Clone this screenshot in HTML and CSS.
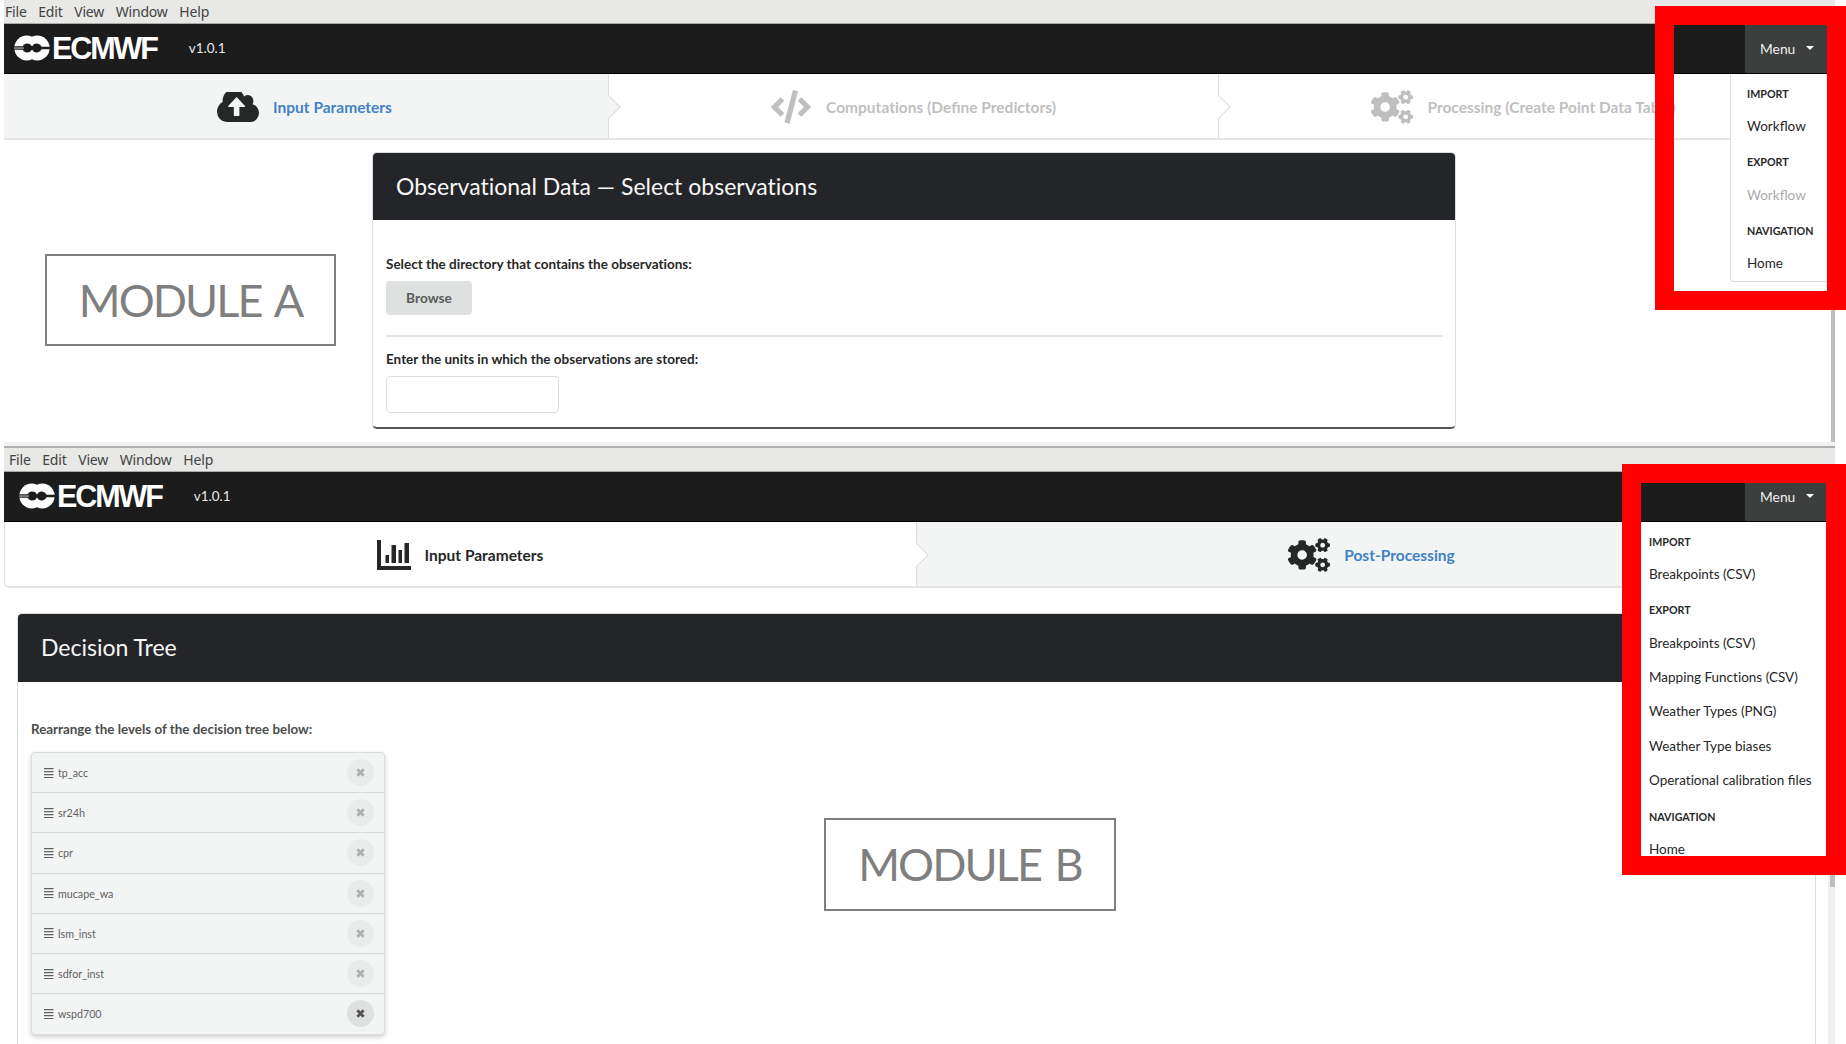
FILE: index.html
```html
<!DOCTYPE html>
<html lang="en">
<head>
<meta charset="utf-8">
<title>ECMWF Calibration</title>
<link rel="stylesheet" href="styles.css">
</head>
<body>
<svg class="defs" width="0" height="0" aria-hidden="true">
<symbol id="small-gear" viewBox="400 0 240 212" overflow="visible"><path d="M512.1 191l-8.2 14.3c-3 5.3-9.4 7.5-15.1 5.4-11.8-4.4-22.6-10.7-32.1-18.6-4.6-3.8-5.8-10.5-2.8-15.7l8.2-14.3c-6.9-8-12.3-17.3-15.9-27.4h-16.5c-6 0-11.2-4.3-12.2-10.3-2-12-2.1-24.6 0-37.1 1-6 6.2-10.4 12.2-10.4h16.5c3.6-10.1 9-19.4 15.9-27.4l-8.2-14.3c-3-5.2-1.9-11.9 2.8-15.7 9.5-7.9 20.4-14.2 32.1-18.6 5.7-2.1 12.1.1 15.1 5.4l8.2 14.3c10.5-1.9 21.2-1.9 31.7 0L552 6.300c3-5.3 9.4-7.5 15.1-5.4 11.8 4.4 22.6 10.7 32.1 18.6 4.6 3.8 5.8 10.5 2.8 15.7l-8.2 14.3c6.9 8 12.3 17.3 15.9 27.4h16.5c6 0 11.2 4.3 12.2 10.3 2 12 2.1 24.6 0 37.1-1 6-6.2 10.4-12.2 10.4h-16.5c-3.6 10.1-9 19.4-15.9 27.4l8.2 14.3c3 5.2 1.900 11.900-2.800 15.700-9.500 7.900-20.400 14.200-32.100 18.600-5.700 2.100-12.100-.1-15.100-5.400l-8.200-14.300c-10.400 1.900-21.200 1.900-31.700 0zm-10.500-58.800c38.500 29.600 82.400-14.300 52.800-52.800-38.500-29.700-82.400 14.300-52.800 52.800z"/></symbol>
<symbol id="cogs" viewBox="0 0 640 512"><use href="#small-gear" x="400" y="0" width="240" height="212"/><use href="#small-gear" x="400" y="299" width="240" height="212"/><path d="M386.3 286.100l33.700 16.800c10.100 5.800 14.500 18.100 10.500 29.100-8.900 24.200-26.400 46.400-42.600 65.800-7.400 8.900-20.200 11.100-30.300 5.300l-29.100-16.800c-16 13.700-34.600 24.600-54.900 31.700v33.600c0 11.600-8.300 21.600-19.700 23.600-24.600 4.200-50.400 4.400-75.900 0-11.500-2-20-11.900-20-23.600V418c-20.300-7.200-38.900-18-54.900-31.700L74 403c-10 5.800-22.900 3.600-30.300-5.300-16.200-19.400-33.300-41.600-42.200-65.700-4-10.900.4-23.200 10.500-29.100l33.300-16.800c-3.900-20.900-3.900-42.400 0-63.400L12 205.800c-10.100-5.800-14.600-18.100-10.500-29 8.900-24.200 26-46.400 42.200-65.800 7.400-8.900 20.200-11.100 30.300-5.300l29.100 16.800c16-13.700 34.600-24.600 54.900-31.700V57.100c0-11.500 8.200-21.500 19.600-23.500 24.600-4.200 50.500-4.400 76-.1 11.500 2 20 11.900 20 23.600v33.600c20.300 7.200 38.900 18 54.900 31.700l29.100-16.800c10-5.800 22.900-3.600 30.300 5.300 16.200 19.400 33.200 41.600 42.100 65.800 4 10.900.1 23.200-10 29.100l-33.700 16.800c3.900 21 3.900 42.500 0 63.500zm-117.600 21.100c59.200-77-28.700-164.900-105.700-105.700-59.200 77 28.700 164.900 105.700 105.700z"/></symbol>
<symbol id="mark" viewBox="0 0 36 26"><circle cx="12.700" cy="13" r="12.400"/><circle cx="23.300" cy="13" r="12.400"/><path fill="#1b1c1b" d="M0 11.300h8.600a5.200 5.200 0 0 1 7.900-1.700L18 11.600l1.500-2a5.200 5.200 0 0 1 8 2.200H36v2.400h-8.500a5.200 5.200 0 0 1-8 2.200L18 14.400l-1.500 2a5.200 5.200 0 0 1-7.900-1.700H0z"/><path fill="#aaa" d="M0 12.400h10v1.300H0z"/></symbol>
<symbol id="bars" viewBox="0 0 10 10"><path d="M0 0h9.500v1.300H0zM0 3h9.500v1.300H0zM0 6h9.500v1.300H0zM0 9h9.500v1H0z"/></symbol>
<symbol id="times" viewBox="0 0 8 8"><path d="M1.200 1.200l5.600 5.600M6.800 1.200L1.200 6.800" stroke="currentColor" stroke-width="2.500"/></symbol>
</svg>

<section class="window window-a">
  <div class="menubar"><span>File</span><span>Edit</span><span>View</span><span>Window</span><span>Help</span></div>
  <header class="topbar"><svg class="mark"><use href="#mark"/></svg><b class="brand">ECMWF</b><span class="version">v1.0.1</span><div class="menu-button">Menu<i class="caret"></i></div></header>
  <nav class="steps steps-a">
    <div class="step active"><svg class="cloud" viewBox="0 256 1920 1280" preserveAspectRatio="none"><path d="M1280 864q0-14-9-23l-352-352q-9-9-23-9t-23 9l-351 351q-10 12-10 24 0 14 9 23t23 9h224v352q0 13 9.500 22.500t22.500 9.500h192q13 0 22.500-9.500t9.500-22.500v-352h224q13 0 22.500-9.500t9.500-22.500zm640 288q0 159-112.500 271.500t-271.500 112.500h-1088q-185 0-316.500-131.500t-131.500-316.500q0-130 70-240t188-165q-2-30-2-43 0-212 150-362t362-150q156 0 285.500 87t188.500 231q71-62 166-62 106 0 181 75t75 181q0 76-41 138 130 31 213.500 135.500t83.500 238.500z"/></svg><span>Input Parameters</span></div>
    <div class="step disabled"><svg class="code" viewBox="0 0 42 34"><path d="M12.500 9L4.500 17l8 8M29.500 9l8 8-8 8M25.500 .7l-8.500 32.300" fill="none" stroke="currentColor" stroke-width="5.300"/></svg><span>Computations (<span class="lig">Define</span> Predictors)</span></div>
    <div class="step disabled"><svg class="cogs"><use href="#cogs"/></svg><span>Processing (Create Point Data Table)</span></div>
  </nav>
  <main class="stage-a">
    <div class="module module-a">MODULE A</div>
    <article class="card card-a">
      <h2>Observational Data — Select observations</h2>
      <div class="card-body">
        <label>Select the directory that contains the observations:</label>
        <button>Browse</button>
        <hr>
        <label>Enter the units in which the observations are stored:</label>
        <input type="text">
      </div>
    </article>
    <div class="thumb-a"></div>
  </main>
  <aside class="dropdown drop-a"><h4>IMPORT</h4><p class="lig">Workflow</p><h4>EXPORT</h4><p class="lig off">Workflow</p><h4>NAVIGATION</h4><p>Home</p></aside>
  <div class="highlight mark-a"></div>
</section>

<section class="window window-b">
  <div class="menubar"><span>File</span><span>Edit</span><span>View</span><span>Window</span><span>Help</span></div>
  <header class="topbar"><svg class="mark"><use href="#mark"/></svg><b class="brand">ECMWF</b><span class="version">v1.0.1</span><div class="menu-button">Menu<i class="caret"></i></div></header>
  <nav class="steps steps-b">
    <div class="step"><svg class="chart" viewBox="0 0 34 30"><path d="M0 0h4v26h30v4H0zM8.500 15H12v8H8.500zM14.500 5H19v18h-4.500zM21.500 10H25v13h-3.500zM27.500 3H32v20h-4.500z"/></svg><span>Input Parameters</span></div>
    <div class="step active"><svg class="cogs"><use href="#cogs"/></svg><span>Post-Processing</span></div>
  </nav>
  <main class="stage-b">
    <article class="card card-b">
      <h2>Decision Tree</h2>
      <div class="card-body">
        <label>Rearrange the levels of the decision tree below:</label>
        <ul class="levels">
          <li><svg class="grip"><use href="#bars"/></svg><span>tp_acc</span><i class="remove"><svg><use href="#times"/></svg></i></li>
          <li><svg class="grip"><use href="#bars"/></svg><span>sr24h</span><i class="remove"><svg><use href="#times"/></svg></i></li>
          <li><svg class="grip"><use href="#bars"/></svg><span>cpr</span><i class="remove"><svg><use href="#times"/></svg></i></li>
          <li><svg class="grip"><use href="#bars"/></svg><span>mucape_wa</span><i class="remove"><svg><use href="#times"/></svg></i></li>
          <li><svg class="grip"><use href="#bars"/></svg><span>lsm_inst</span><i class="remove"><svg><use href="#times"/></svg></i></li>
          <li><svg class="grip"><use href="#bars"/></svg><span>sdfor_inst</span><i class="remove"><svg><use href="#times"/></svg></i></li>
          <li><svg class="grip"><use href="#bars"/></svg><span>wspd700</span><i class="remove on"><svg><use href="#times"/></svg></i></li>
        </ul>
      </div>
    </article>
    <div class="track"><div class="thumb-b"></div></div>
  </main>
  <div class="module module-b">MODULE B</div>
  <aside class="dropdown drop-b"><h4>IMPORT</h4><p>Breakpoints (CSV)</p><h4>EXPORT</h4><p>Breakpoints (CSV)</p><p>Mapping Functions (CSV)</p><p>Weather Types (PNG)</p><p>Weather Type biases</p><p>Operational calibration <span class="lig">files</span></p><h4>NAVIGATION</h4><p>Home</p></aside>
  <div class="highlight mark-b"></div>
</section>
</body>
</html>
```
FILE: styles.css
```css
* { box-sizing: border-box; }
body { margin: 0; width: 1846px; height: 1044px; overflow: hidden; background: #fff; font-family: Lato, sans-serif; color: #262727; font-variant-ligatures: none; }
.lig { font-variant-ligatures: normal; }
.defs { display: block; height: 0; }
svg { display: block; flex: none; fill: currentColor; }
.window { position: relative; width: 1846px; padding: 0 11px 0 4px; display: flex; flex-direction: column; overflow: hidden; }
.window-a { height: 442px; }
.window-b { height: 602px; }

.menubar { flex: none; height: 24px; padding-left: 1px; display: flex; gap: 11.700px; background: #e8e8e6; border-bottom: 1px solid #aaa; font-family: "Noto Sans", sans-serif; font-size: 14px; line-height: 23px; letter-spacing: -.2px; color: #424444; }
.window-b .menubar { height: 30px; padding: 2px 0 0 5px; border-top: 4px solid #f2f2f2; box-shadow: inset 0 2px #aeb0ad; line-height: 24px; }
.topbar { flex: none; height: 50px; padding: 0 0 1px 10px; display: flex; align-items: center; background: #1b1c1b; border-bottom: 1px solid #000; color: #fff; }
.window-b .topbar { padding-left: 15px; }
.mark { width: 36px; height: 26px; }
.brand { margin-left: 2px; font-family: "Liberation Sans", sans-serif; font-size: 30.500px; line-height: 48px; letter-spacing: -2.100px; }
.version { margin-left: 32px; font-size: 13.500px; color: #e8e8e8; }
.menu-button { margin: 0 0 -1px auto; width: 90px; height: 49px; padding: 0 0 1px 15px; display: flex; align-items: center; background: #3d3e3e; font-size: 13.800px; color: #f0f0f0; }
.caret { margin-left: 11px; border: 4px solid transparent; border-top-color: #fff; border-bottom: 0; }

.steps { flex: none; height: 66px; display: grid; border-bottom: 2px solid #e4e5e5; }
.steps-a { grid-template-columns: 605px 610px 1fr; }
.steps-b { grid-template-columns: 912px 1fr; border-left: 1px solid #ddd; border-radius: 0 0 0 5px; }
.step { position: relative; padding: 2px 3px 0 0; display: flex; align-items: center; justify-content: center; gap: 14px; border-right: 1px solid #dcdddd; font-size: 15.500px; font-weight: bold; }
.step:nth-child(2) { padding-right: 1px; }
.step:last-child { border-right: 0; padding-right: 7px; }
.steps-b .step { padding-right: 1px; }
.steps-b .step:last-child { padding-right: 9px; }
.step:not(:last-child)::after { content: ""; position: absolute; z-index: 1; right: -9px; top: 24px; width: 17px; height: 17px; background: #fff; border: solid #dcdddd; border-width: 0 1px 1px 0; transform: rotate(-45deg); }
.step.active { background: #f3f4f4; }
.step.active::after { background: #f3f4f4 !important; }
.step.active span { color: #4183c4; }
.step.disabled { color: #bfbfbf; }
.cloud { width: 42px; height: 30px; }
.code { width: 42px; height: 34px; }
.cogs { width: 42px; height: 34px; }
.chart { width: 34px; height: 30px; }

.stage-a { flex: 1; position: relative; display: flex; align-items: flex-start; }
.module { border: 2px solid #7f7f7f; color: #7f7f7f; font-size: 45px; letter-spacing: -1.900px; word-spacing: 4px; text-align: center; white-space: nowrap; }
.module-a { margin: 114px 0 0 41px; width: 291px; height: 92px; line-height: 88px; }
.card { border: 1px solid #dcdddd; border-radius: 5px; background: #fff; overflow: hidden; }
.card h2 { margin: 0; height: 67px; padding-left: 23px; background: #242529; color: #f7f7f7; font-size: 23px; font-weight: normal; line-height: 66px; }
.card-a { margin: 12px 0 0 36px; width: 1084px; height: 277px; border-bottom: 2px solid #555; }
.card-body { padding: 35px 13px 0; display: flex; flex-direction: column; align-items: flex-start; }
.card label { font-size: 13.500px; line-height: 18px; font-weight: bold; }
.card button { margin-top: 8px; width: 86px; height: 34px; padding-bottom: 2px; border: 0; border-radius: 4px; background: #dfe1e0; font-family: Lato, sans-serif; font-size: 13.700px; font-weight: bold; color: #5a5b5b; }
.card hr { margin: 20px 0 13px; width: 1057px; height: 2px; border: 0; background: #e4e5e5; }
.card input { margin-top: 8px; width: 173px; height: 37px; border: 1px solid #dcdddd; border-radius: 4px; }
.thumb-a { position: absolute; right: 0; top: 0; width: 4px; height: 302px; background: #bfbfbf; }

.stage-b { flex: 1; display: flex; justify-content: space-between; }
.card-b { margin: 25px 0 -10px 13px; width: 1799px; }
.card-b h2 { height: 68px; padding-left: 23px; line-height: 67px; }
.card-b .card-body { padding-top: 38px; color: #4c4d4d; }
.card-b label { font-size: 13.400px; }
.levels { margin: 14px 0 0; padding: 0; width: 354px; list-style: none; border: 1px solid #dcdddd; border-radius: 4px; background: #f3f4f4; box-shadow: 0 2px 5px #0003; }
.levels li { height: 40.200px; padding: 0 10px 0 12px; display: flex; align-items: center; border-bottom: 1px solid #d8d9d9; font-size: 10.700px; color: #606161; }
.levels li:last-child { border-bottom: 0; height: 39.500px; }
.grip { width: 10px; height: 10px; margin-right: 4px; }
.remove { margin-left: auto; width: 27px; height: 27px; border-radius: 50%; display: grid; place-items: center; background: #eaebeb; color: #afb0b0; }
.remove svg { width: 9px; height: 9px; }
.remove.on { background: #dfe0e0; color: #555; }
.track { width: 7px; background: #f0f0f0; }
.thumb-b { margin-left: 2px; width: 5px; height: 299px; background: #bfbfbf; }
.module-b { position: absolute; left: 824px; top: 376px; width: 292px; height: 93px; line-height: 89px; }

.dropdown { position: absolute; background: #fff; font-size: 13.500px; }
.dropdown h4 { margin: 0; height: 34.100px; padding-top: 2px; font-size: 10.700px; line-height: 34px; }
.dropdown p { margin: 0; height: 34.400px; line-height: 34px; white-space: nowrap; }
.dropdown .off { color: #aaa; }
.drop-a { left: 1730px; top: 74px; width: 110px; height: 208px; padding: 1px 0 0 16px; border: 1px solid #dcdddd; border-top: 0; border-radius: 0 0 0 4px; }
.drop-b { left: 1641px; top: 80px; width: 185px; height: 334px; padding: 1px 0 0 8px; overflow: hidden; }
.highlight { position: absolute; border: 19px solid #f00; }
.mark-a { left: 1655px; top: 6px; width: 191px; height: 304px; }
.mark-b { left: 1622px; top: 22px; width: 224px; height: 411px; border-right-width: 20px; }
```
